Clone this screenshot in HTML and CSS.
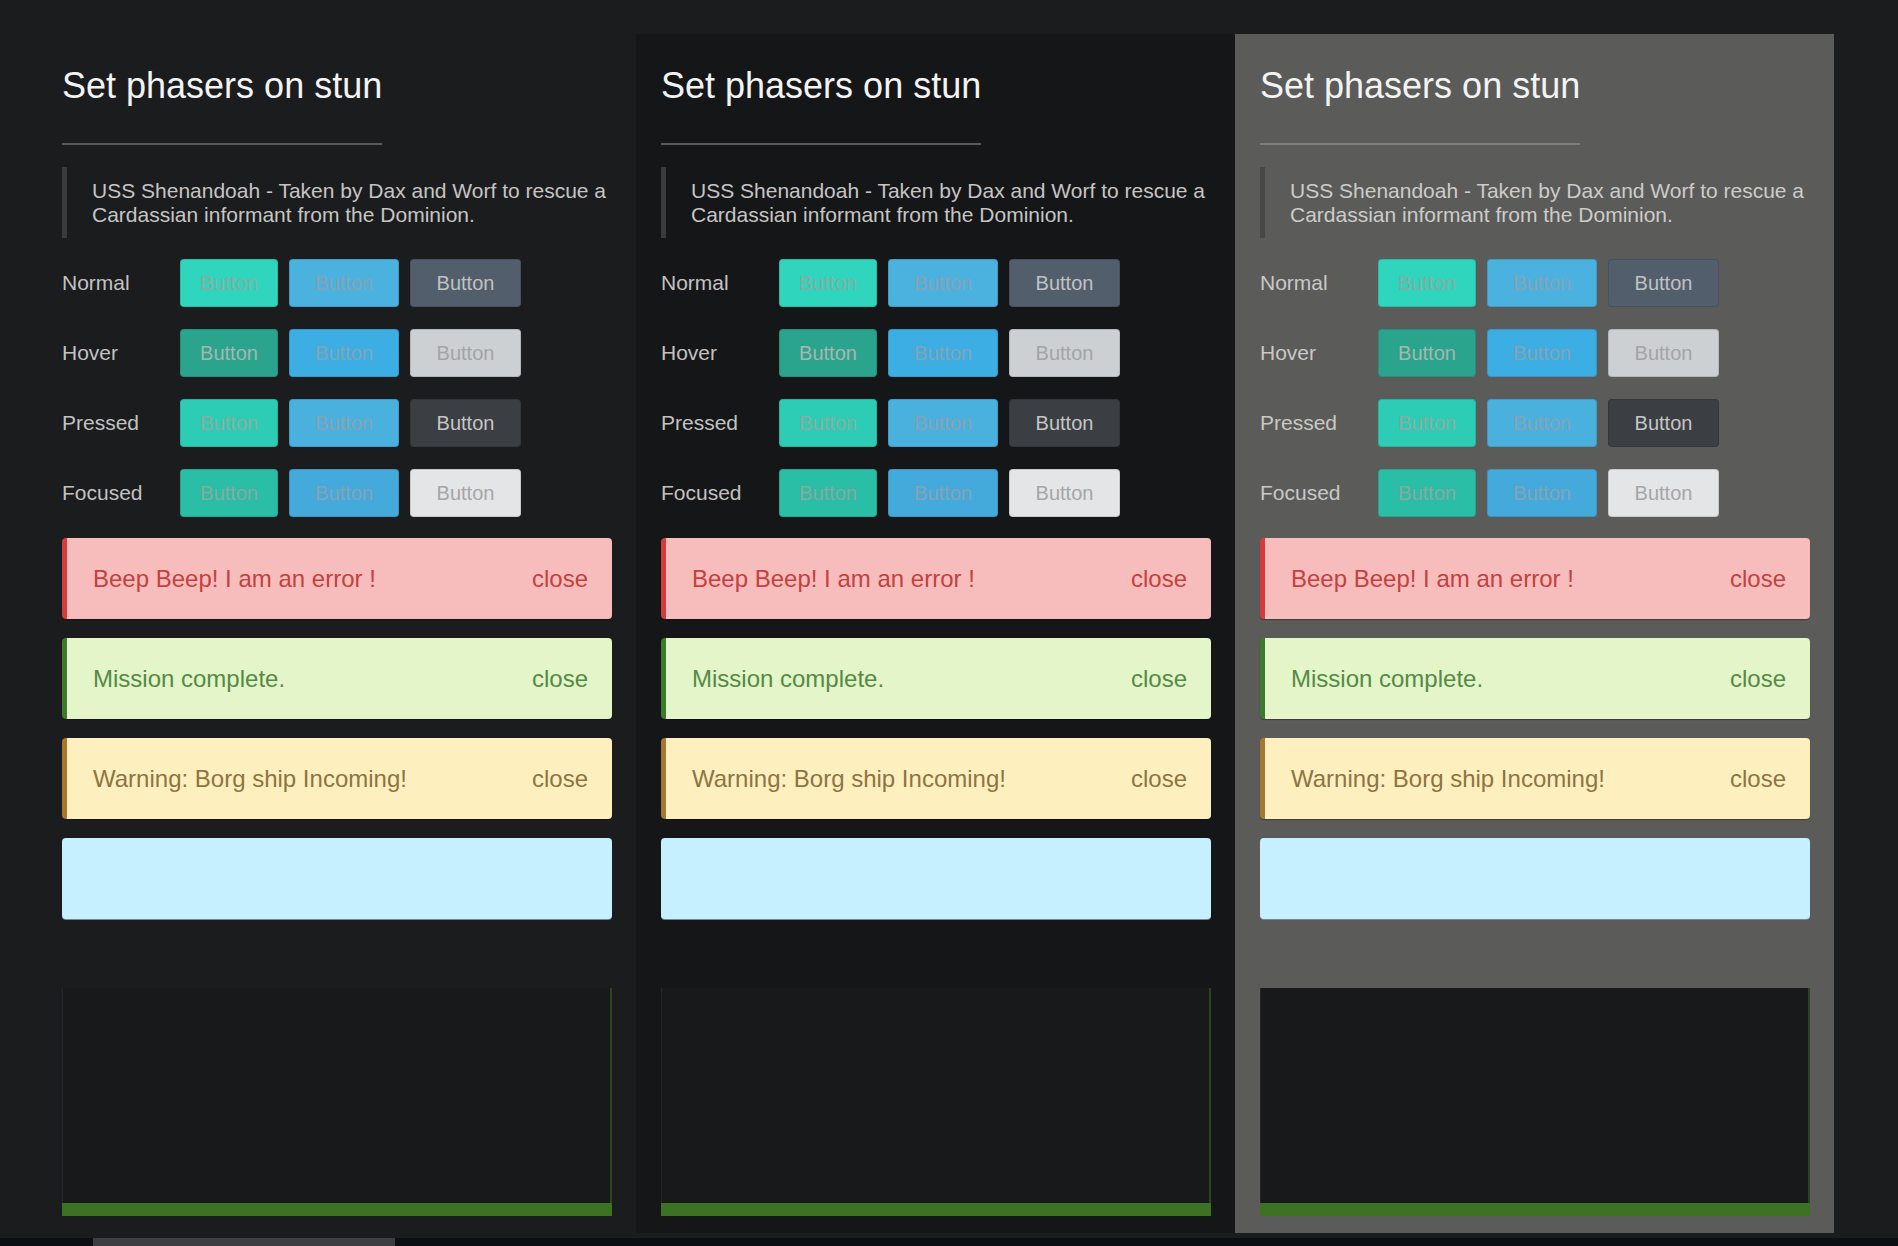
FILE: index.html
```html
<!DOCTYPE html>
<html lang="en">
<head>
<meta charset="utf-8">
<title>Set phasers on stun</title>
<link rel="stylesheet" href="styles.css">
</head>
<body>
<div class="page">
  <section class="panel">
    <div class="head"><h1 class="title">Set phasers on stun</h1></div>
    <blockquote class="quote">USS Shenandoah - Taken by Dax and Worf to rescue a<br>Cardassian informant from the Dominion.</blockquote>
    <div class="states">
      <div class="row"><span class="label">Normal</span><div class="btns"><button class="btn w1 n1">Button</button><button class="btn w2 n2">Button</button><button class="btn w3 n3">Button</button></div></div>
      <div class="row"><span class="label">Hover</span><div class="btns"><button class="btn w1 h1">Button</button><button class="btn w2 h2">Button</button><button class="btn w3 h3">Button</button></div></div>
      <div class="row"><span class="label">Pressed</span><div class="btns"><button class="btn w1 p1">Button</button><button class="btn w2 p2">Button</button><button class="btn w3 p3">Button</button></div></div>
      <div class="row"><span class="label">Focused</span><div class="btns"><button class="btn w1 f1">Button</button><button class="btn w2 f2">Button</button><button class="btn w3 f3">Button</button></div></div>
    </div>
    <div class="alerts">
      <div class="alert error"><span>Beep Beep! I am an error !</span><span class="close">close</span></div>
      <div class="alert success"><span>Mission complete.</span><span class="close">close</span></div>
      <div class="alert warning"><span>Warning: Borg ship Incoming!</span><span class="close">close</span></div>
      <div class="alert info"></div>
    </div>
    <div class="box"><div class="box-inner"></div><div class="box-bar"></div></div>
  </section>
  <section class="panel panel-dark">
    <div class="head"><h1 class="title">Set phasers on stun</h1></div>
    <blockquote class="quote">USS Shenandoah - Taken by Dax and Worf to rescue a<br>Cardassian informant from the Dominion.</blockquote>
    <div class="states">
      <div class="row"><span class="label">Normal</span><div class="btns"><button class="btn w1 n1">Button</button><button class="btn w2 n2">Button</button><button class="btn w3 n3">Button</button></div></div>
      <div class="row"><span class="label">Hover</span><div class="btns"><button class="btn w1 h1">Button</button><button class="btn w2 h2">Button</button><button class="btn w3 h3">Button</button></div></div>
      <div class="row"><span class="label">Pressed</span><div class="btns"><button class="btn w1 p1">Button</button><button class="btn w2 p2">Button</button><button class="btn w3 p3">Button</button></div></div>
      <div class="row"><span class="label">Focused</span><div class="btns"><button class="btn w1 f1">Button</button><button class="btn w2 f2">Button</button><button class="btn w3 f3">Button</button></div></div>
    </div>
    <div class="alerts">
      <div class="alert error"><span>Beep Beep! I am an error !</span><span class="close">close</span></div>
      <div class="alert success"><span>Mission complete.</span><span class="close">close</span></div>
      <div class="alert warning"><span>Warning: Borg ship Incoming!</span><span class="close">close</span></div>
      <div class="alert info"></div>
    </div>
    <div class="box"><div class="box-inner"></div><div class="box-bar"></div></div>
  </section>
  <section class="panel panel-gray">
    <div class="head"><h1 class="title">Set phasers on stun</h1></div>
    <blockquote class="quote">USS Shenandoah - Taken by Dax and Worf to rescue a<br>Cardassian informant from the Dominion.</blockquote>
    <div class="states">
      <div class="row"><span class="label">Normal</span><div class="btns"><button class="btn w1 n1">Button</button><button class="btn w2 n2">Button</button><button class="btn w3 n3">Button</button></div></div>
      <div class="row"><span class="label">Hover</span><div class="btns"><button class="btn w1 h1">Button</button><button class="btn w2 h2">Button</button><button class="btn w3 h3">Button</button></div></div>
      <div class="row"><span class="label">Pressed</span><div class="btns"><button class="btn w1 p1">Button</button><button class="btn w2 p2">Button</button><button class="btn w3 p3">Button</button></div></div>
      <div class="row"><span class="label">Focused</span><div class="btns"><button class="btn w1 f1">Button</button><button class="btn w2 f2">Button</button><button class="btn w3 f3">Button</button></div></div>
    </div>
    <div class="alerts">
      <div class="alert error"><span>Beep Beep! I am an error !</span><span class="close">close</span></div>
      <div class="alert success"><span>Mission complete.</span><span class="close">close</span></div>
      <div class="alert warning"><span>Warning: Borg ship Incoming!</span><span class="close">close</span></div>
      <div class="alert info"></div>
    </div>
    <div class="box"><div class="box-inner"></div><div class="box-bar"></div></div>
  </section>
</div>
<div class="hscroll"><div class="thumb"></div></div>
</body>
</html>
```
FILE: styles.css
```css
* { box-sizing: border-box; }
html, body { margin: 0; padding: 0; }
body {
  width: 1898px;
  height: 1246px;
  overflow: hidden;
  background: #1a1c1e;
  font-family: "Liberation Sans", Arial, sans-serif;
}
.page {
  display: flex;
  height: 1238px;
  padding: 34px 0 0 37px;
}
.panel {
  width: 599px;
  height: 1199px;
  padding: 32px 24px 0 25px;
  flex: none;
}
.panel-dark { background: #151618; }
.panel-gray { background: #5b5b59; }

.head { display: block; }
.title {
  display: inline-block;
  margin: 0;
  font-size: 36px;
  line-height: 40px;
  font-weight: normal;
  color: #f3f3f3;
  padding-bottom: 37px;
  border-bottom: 2px solid #58595a;
}
.panel-gray .title { border-bottom-color: #7d7d7b; }

.quote {
  margin: 22px 0 0;
  padding: 12px 0 11px 25px;
  border-left: 5px solid #3a3b3d;
  font-size: 21px;
  line-height: 24px;
  color: #c6c5c3;
  white-space: nowrap;
}
.panel-gray .quote { border-left-color: #474746; color: #cdccc9; }

.states { margin-top: 21px; }
.row {
  display: flex;
  align-items: center;
  height: 48px;
  margin-bottom: 22px;
}
.row:last-child { margin-bottom: 0; }
.label {
  width: 118px;
  font-size: 21px;
  color: #c3c2c0;
}
.panel-gray .label { color: #c9c8c5; }
.btns { display: flex; gap: 11px; }
.btn {
  height: 48px;
  border: 1px solid rgba(0, 0, 0, 0.12);
  border-radius: 4px;
  font-family: "Liberation Sans", Arial, sans-serif;
  font-size: 20px;
  padding: 0;
  display: flex;
  align-items: center;
  justify-content: center;
}
.w1 { width: 98px; }
.w2 { width: 110px; }
.w3 { width: 111px; }

.n1 { background: #2fd5bc; color: #89aba3; }
.n2 { background: #4bb2df; color: #86a2b3; }
.n3 { background: #525e6b; color: #c0c2c4; }
.h1 { background: #2aa48d; color: #a9b5b1; }
.h2 { background: #3caee4; color: #86a2b3; }
.h3 { background: #cdd0d3; color: #a2a4a7; }
.p1 { background: #2ccdb4; color: #89aba3; }
.p2 { background: #4ab1df; color: #86a2b3; }
.p3 { background: #3b3e42; color: #c6c6c6; }
.f1 { background: #2abea6; color: #89a8a0; }
.f2 { background: #44aadc; color: #86a2b3; }
.f3 { background: #e4e5e7; color: #a6a6a6; }

.alerts {
  margin-top: 21px;
  display: flex;
  flex-direction: column;
  gap: 19px;
}
.alert {
  height: 81px;
  border-radius: 4px;
  border-left: 5px solid transparent;
  display: flex;
  align-items: center;
  justify-content: space-between;
  padding: 0 24px 0 26px;
  font-size: 24px;
  box-shadow: 0 1px 1px rgba(0, 0, 0, 0.35);
}
.error { background: #f7bdbd; border-left-color: #d53b3b; color: #c4413f; }
.success { background: #e3f5c9; border-left-color: #3d7a2b; color: #558a45; }
.warning { background: #fdf0be; border-left-color: #a57832; color: #8d7443; }
.info { background: #c6efff; border-left-color: #c6efff; box-shadow: 0 1px 0 #6e8896; }

.box {
  margin-top: 69px;
  display: flex;
  flex-direction: column;
}
.box-inner {
  height: 215px;
  background: #18191b;
  border-left: 1px solid #25272a;
  border-right: 2px solid #2c4420;
}
.box-bar {
  height: 13px;
  background: #3d7222;
}

.hscroll {
  height: 8px;
  background: #0b0f13;
  padding-left: 93px;
}
.thumb {
  width: 302px;
  height: 8px;
  background: #3c3e41;
}
```
